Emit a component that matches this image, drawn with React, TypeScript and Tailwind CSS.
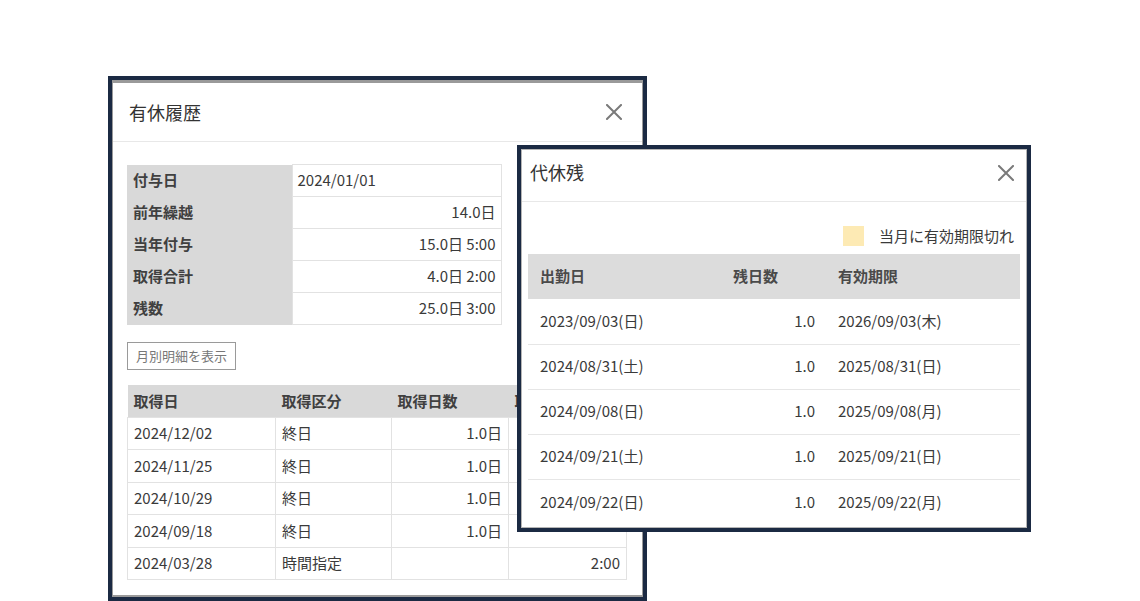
import React from "react";

const font = { fontFamily: '"Noto Sans CJK JP", "Noto Sans", sans-serif' };

function CloseIcon() {
  return (
    <svg width="16" height="16" viewBox="0 0 16 16" fill="none">
      <path d="M1 1L15 15M15 1L1 15" stroke="#7a7a7a" strokeWidth="2" strokeLinecap="square" />
    </svg>
  );
}

const info = [
  ["付与日", "2024/01/01", "left"],
  ["前年繰越", "14.0日", "right"],
  ["当年付与", "15.0日 5:00", "right"],
  ["取得合計", "4.0日 2:00", "right"],
  ["残数", "25.0日 3:00", "right"],
];

const history = [
  ["2024/12/02", "終日", "1.0日", ""],
  ["2024/11/25", "終日", "1.0日", ""],
  ["2024/10/29", "終日", "1.0日", ""],
  ["2024/09/18", "終日", "1.0日", ""],
  ["2024/03/28", "時間指定", "", "2:00"],
];

const daikyu = [
  ["2023/09/03(日)", "1.0", "2026/09/03(木)"],
  ["2024/08/31(土)", "1.0", "2025/08/31(日)"],
  ["2024/09/08(日)", "1.0", "2025/09/08(月)"],
  ["2024/09/21(土)", "1.0", "2025/09/21(日)"],
  ["2024/09/22(日)", "1.0", "2025/09/22(月)"],
];

export default function App() {
  return (
    <div className="relative w-[1140px] h-[601px] bg-white overflow-hidden text-[#3a3a3a]" style={font}>
      {/* Left dialog */}
      <div className="absolute left-[108px] top-[76px] w-[539px] h-[525px] border-[4px] border-[#1b2a43] bg-white">
        <div className="h-full border-t-[3px] border-x border-b-2 border-[#9a9a9a] flex flex-col">
          <div className="h-[59px] flex items-center justify-between pl-[16px] pr-[20px] border-b border-[#e8e8e8] shrink-0">
            <span className="text-[18px] text-[#333]">有休履歴</span>
            <CloseIcon />
          </div>
          <div className="pt-[22px] pl-[14px] pr-[14px]">
            <table className="border-collapse text-[15px] w-[374px] table-fixed">
              <colgroup>
                <col className="w-[165px]" />
                <col className="w-[209px]" />
              </colgroup>
              <tbody>
                {info.map(([k, v, a], i) => (
                  <tr key={i} className="h-[32px]">
                    <td className="bg-[#d9d9d9] font-bold pl-[6px] text-[#404040]">{k}</td>
                    <td
                      className={
                        "border border-[#e2e2e2] px-[5px] text-[#3a3a3a] " +
                        (a === "right" ? "text-right" : "text-left")
                      }
                    >
                      {v}
                    </td>
                  </tr>
                ))}
              </tbody>
            </table>
            <div className="mt-[17px]">
              <button className="h-[28px] w-[109px] border border-[#9a9a9a] text-[13px] text-[#777] bg-white">
                月別明細を表示
              </button>
            </div>
            <table className="mt-[15px] border-collapse text-[15px] w-[499px] table-fixed">
              <colgroup>
                <col className="w-[148px]" />
                <col className="w-[116px]" />
                <col className="w-[117px]" />
                <col className="w-[118px]" />
              </colgroup>
              <thead>
                <tr className="h-[32px] bg-[#d9d9d9] text-left font-bold text-[#404040]">
                  <th className="pl-[6px] font-bold">取得日</th>
                  <th className="pl-[6px] font-bold">取得区分</th>
                  <th className="pl-[6px] font-bold">取得日数</th>
                  <th className="pl-[6px] font-bold">取得時間</th>
                </tr>
              </thead>
              <tbody>
                {history.map((r, i) => (
                  <tr key={i} className="h-[32.5px]">
                    <td className="border border-[#e2e2e2] pl-[6px]">{r[0]}</td>
                    <td className="border border-[#e2e2e2] pl-[6px]">{r[1]}</td>
                    <td className="border border-[#e2e2e2] pr-[6px] text-right">{r[2]}</td>
                    <td className="border border-[#e2e2e2] pr-[6px] text-right">{r[3]}</td>
                  </tr>
                ))}
              </tbody>
            </table>
          </div>
        </div>
      </div>

      {/* Right dialog */}
      <div className="absolute left-[517px] top-[145px] w-[514px] h-[387px] border-[4px] border-[#1b2a43] bg-white">
        <div className="h-full border border-[#b5b5b5] flex flex-col">
          <div className="h-[52px] flex items-center justify-between pl-[8px] pr-[12px] pb-[6px] border-b border-[#e8e8e8] shrink-0">
            <span className="text-[18px] text-[#333]">代休残</span>
            <CloseIcon />
          </div>
          <div className="pl-[6px] pr-[6px]">
            <div className="h-[52px] flex items-center justify-end gap-[15px] pr-[6px] pt-[16px]">
              <span className="w-[21px] h-[20px] bg-[#fdeab4]" />
              <span className="text-[15px] text-[#3a3a3a]">当月に有効期限切れ</span>
            </div>
            <table className="border-collapse text-[15px] w-[492px] table-fixed">
              <colgroup>
                <col className="w-[193px]" />
                <col className="w-[106px]" />
                <col className="w-[193px]" />
              </colgroup>
              <thead>
                <tr className="h-[45px] bg-[#dcdcdc] text-left text-[#4a4a4a]">
                  <th className="pl-[12px] font-bold">出勤日</th>
                  <th className="pl-[12px] font-bold">残日数</th>
                  <th className="pl-[11px] font-bold">有効期限</th>
                </tr>
              </thead>
              <tbody>
                {daikyu.map((r, i) => (
                  <tr key={i} className={"h-[45px] " + (i < daikyu.length - 1 ? "border-b border-[#e6e6e6]" : "")}>
                    <td className="pl-[12px]">{r[0]}</td>
                    <td className="pr-[12px] text-right">{r[1]}</td>
                    <td className="pl-[11px]">{r[2]}</td>
                  </tr>
                ))}
              </tbody>
            </table>
          </div>
        </div>
      </div>
    </div>
  );
}
